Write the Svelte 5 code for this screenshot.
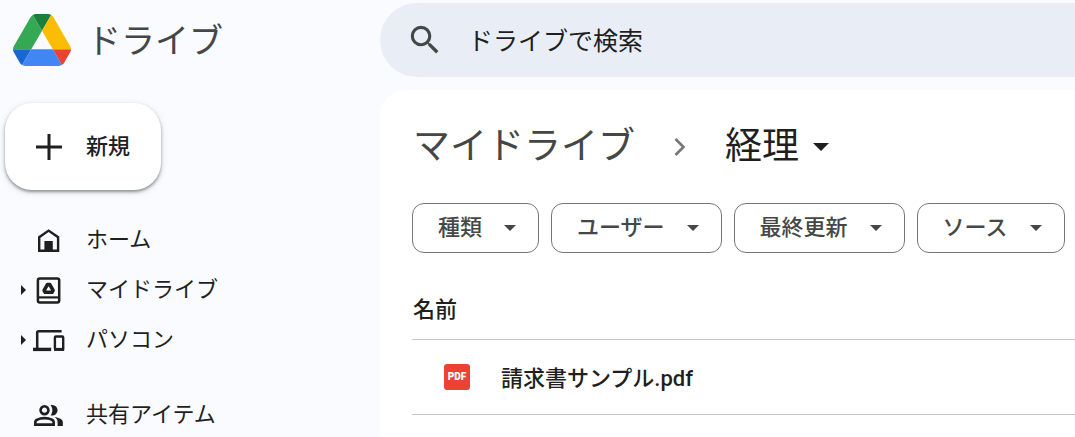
<script>
  const filters = ['種類', 'ユーザー', '最終更新', 'ソース'];
  const files = ['請求書サンプル.pdf'];
  const places = [
    { label: 'ホーム', icon: 'home' },
    { label: 'マイドライブ', icon: 'drive', expandable: true },
    { label: 'パソコン', icon: 'devices', expandable: true },
    { label: '共有アイテム', icon: 'people', spaced: true }
  ];
</script>

<div class="app">
  <aside>
    <a class="brand" href="#home">
      <svg width="58" height="52" viewBox="0 0 87.3 78" aria-hidden="true">
        <path fill="#1967d2" d="m6.6 66.85 3.85 6.65c.8 1.4 1.95 2.5 3.3 3.3l13.75-23.8h-27.5c0 1.55.4 3.1 1.2 4.5z" />
        <path fill="#34a853" d="m43.65 25-13.75-23.8c-1.35.8-2.5 1.9-3.3 3.3l-25.4 44a9.06 9.06 0 0 0 -1.2 4.5h27.5z" />
        <path fill="#ea4335" d="m73.55 76.8c1.35-.8 2.5-1.9 3.3-3.3l1.6-2.75 7.65-13.25c.8-1.4 1.2-2.95 1.2-4.5h-27.5z" />
        <path fill="#188038" d="m43.65 25 13.75-23.8c-1.35-.8-2.9-1.2-4.5-1.2h-18.5c-1.6 0-3.15.45-4.5 1.2z" />
        <path fill="#4285f4" d="m59.8 53h-32.3l-13.75 23.8c1.35.8 2.9 1.2 4.5 1.2h50.8c1.6 0 3.15-.45 4.5-1.2z" />
        <path fill="#fbbc04" d="m73.4 26.5-12.7-22c-.8-1.4-1.95-2.5-3.3-3.3l-13.75 23.8 16.15 28h27.45c0-1.55-.4-3.1-1.2-4.5z" />
      </svg>
      <span>ドライブ</span>
    </a>

    <button class="new" type="button">
      <svg width="26" height="26" viewBox="0 0 26 26" aria-hidden="true">
        <path d="M13 0v26M0 13h26" stroke="#1f1f1f" stroke-width="3" />
      </svg>
      <span>新規</span>
    </button>

    <nav>
      {#each places as place}
        <a class="place" class:spaced={place.spaced} href="#{place.icon}">
          <span class="twisty">
            {#if place.expandable}
              <svg width="5" height="10" viewBox="0 0 5 10" aria-hidden="true"><path d="M0 0l5 5-5 5z" fill="#1f1f1f" /></svg>
            {/if}
          </span>
          <svg width="34" height="32" viewBox="0 0 34 32" fill="none" stroke="#1f1f1f" aria-hidden="true">
            {#if place.icon === 'home'}
              <path d="M7.2 26.8V13.2l9.4-6.6 9.5 6.6v13.6z" stroke-width="2.4" />
              <path d="M12.4 17h8.4v10h-8.4z" fill="#1f1f1f" stroke="none" />
            {:else if place.icon === 'drive'}
              <rect x="5.9" y="4.5" width="21.3" height="24" rx="2" stroke-width="2.5" />
              <path d="M6 23.4h21" stroke-width="2.2" />
              <path d="M15.4 10.6h2.4l3.3 5.8-1.1 1.8h-6.8l-1.1-1.8z" stroke-width="3.6" stroke-linejoin="round" />
            {:else if place.icon === 'devices'}
              <path d="M5.2 24V8.6q0-1.4 1.4-1.4h23" stroke-width="2.5" />
              <path d="M1 25.4h18.2" stroke-width="3.4" />
              <rect x="22.9" y="12.5" width="8.3" height="12.8" rx="1" stroke-width="2.4" />
              <path d="M22 25.4h10.2" stroke-width="3" />
            {:else}
              <path transform="translate(.7 .75) scale(1.31)" fill="#1f1f1f" stroke="none" d="M1 20v-2.8q0-.85.438-1.562T2.6 14.55q1.55-.775 3.15-1.163T9 13t3.25.388t3.15 1.162q.725.375 1.163 1.088T17 17.2V20zm18 0v-3q0-1.1-.612-2.113T16.65 13.15q1.275.15 2.4.513t2.1.887q.9.5 1.375 1.112T23 17v3zM9 12q-1.65 0-2.825-1.175T5 8t1.175-2.825T9 4t2.825 1.175T13 8t-1.175 2.825T9 12m10-4q0 1.65-1.175 2.825T15 12q-.275 0-.7-.062t-.7-.138q.675-.8 1.037-1.775T15 8t-.362-2.025T13.6 4.2q.35-.125.7-.163T15 4q1.65 0 2.825 1.175T19 8M3 18h12v-.8q0-.275-.137-.5t-.363-.35q-1.35-.675-2.725-1.012T9 15t-2.775.338T3.5 16.35q-.225.125-.363.35T3 17.2zm6-8q.825 0 1.413-.587T11 8t-.587-1.412T9 6t-1.412.588T7 8t.588 1.413T9 10" />
            {/if}
          </svg>
          <span class="label">{place.label}</span>
        </a>
      {/each}
    </nav>
  </aside>

  <div class="content">
    <label class="search">
      <svg width="38" height="38" viewBox="0 0 24 24" aria-hidden="true">
        <path fill="#444746" d="M15.5 14h-.79l-.28-.27A6.47 6.47 0 0 0 16 9.5 6.5 6.5 0 1 0 9.5 16c1.61 0 3.09-.59 4.23-1.57l.27.28v.79l5 4.99L20.49 19zm-6 0C7.01 14 5 11.99 5 9.5S7.01 5 9.5 5 14 7.01 14 9.5 11.99 14 9.5 14" />
      </svg>
      <input type="search" placeholder="ドライブで検索" />
    </label>

    <main>
      <div class="crumbs">
        <a href="#drive">マイドライブ</a>
        <svg width="12" height="20" viewBox="0 0 12 20" aria-hidden="true">
          <path d="M1.5 2l8 8-8 8" fill="none" stroke="#747775" stroke-width="2.6" />
        </svg>
        <button class="current" type="button">
          <span>経理</span>
          <svg width="16" height="8" viewBox="0 0 16 8" aria-hidden="true"><path d="M0 0h16l-8 8z" fill="currentColor" /></svg>
        </button>
      </div>

      <div class="filters">
        {#each filters as filter}
          <button class="chip" type="button">
            <span>{filter}</span>
            <svg width="12" height="6" viewBox="0 0 12 6" aria-hidden="true"><path d="M0 0h12l-6 6z" fill="currentColor" /></svg>
          </button>
        {/each}
      </div>

      <table>
        <thead>
          <tr><th scope="col">名前</th></tr>
        </thead>
        <tbody>
          {#each files as file}
            <tr>
              <td>
                <div class="file">
                  <span class="badge">PDF</span>
                  <span class="name">{file}</span>
                </div>
              </td>
            </tr>
          {/each}
        </tbody>
      </table>
    </main>
  </div>
</div>

<style>
  :global(body) {
    background: #f9fbff;
  }

  .app {
    display: grid;
    grid-template-columns: 380px 1fr;
    height: 100vh;
    overflow: hidden;
    background: #f9fbff;
    color: #1f1f1f;
    font: 400 22px/32px "Noto Sans CJK JP", sans-serif;
    white-space: nowrap;
  }

  a {
    color: inherit;
    text-decoration: none;
  }

  button {
    border: 0;
    padding: 0;
    background: none;
    color: inherit;
    font: inherit;
    cursor: pointer;
  }

  svg {
    flex: none;
  }

  .brand {
    display: flex;
    align-items: center;
    gap: 16px;
    height: 80px;
    padding-left: 13px;
    color: #444746;
    font-size: 34px;
  }

  .brand span {
    padding-bottom: 2px;
  }

  .new {
    display: flex;
    align-items: center;
    gap: 24px;
    height: 87px;
    margin: 23px 0 25px 5px;
    padding: 0 31px;
    border-radius: 27px;
    background: #fff;
    box-shadow: 0 2px 3px rgba(60, 64, 67, 0.5), 0 2px 6px 1px rgba(60, 64, 67, 0.12);
    font-weight: 500;
  }

  .new span {
    padding-bottom: 6px;
  }

  .place {
    display: flex;
    align-items: center;
    height: 50px;
    padding-left: 21px;
  }

  .spaced {
    margin-top: 25px;
  }

  .twisty {
    display: flex;
    width: 11px;
  }

  .label {
    margin-left: 20px;
    padding-bottom: 6px;
  }

  .content {
    display: flex;
    flex-direction: column;
    gap: 13px;
    min-width: 0;
    padding-top: 3px;
  }

  .search {
    display: flex;
    align-items: center;
    gap: 24px;
    height: 74px;
    flex: none;
    padding-left: 26px;
    border-radius: 37px 0 0 37px;
    background: #e9eef6;
  }

  .search input {
    flex: 1;
    min-width: 0;
    padding: 0 0 2px;
    border: 0;
    outline: 0;
    background: none;
    color: inherit;
    font: inherit;
    font-size: 25px;
    appearance: none;
  }

  .search input::placeholder {
    color: #1f1f1f;
    opacity: 1;
  }

  main {
    flex: 1;
    padding: 29px 0 0 32px;
    border-radius: 26px 0 0 0;
    background: #fff;
  }

  .crumbs {
    display: flex;
    align-items: center;
    height: 56px;
    gap: 39px;
    padding-left: 1px;
    color: #444746;
    font-size: 37px;
  }

  .crumbs a,
  .crumbs span {
    padding-bottom: 8px;
  }

  .current {
    display: flex;
    align-items: center;
    gap: 14px;
    color: #1f1f1f;
  }

  .filters {
    display: flex;
    gap: 12px;
    margin-top: 28px;
  }

  .chip {
    display: flex;
    align-items: center;
    gap: 22px;
    height: 50px;
    padding: 0 22px 0 25px;
    border: 1px solid #747775;
    border-radius: 12px;
    color: #444746;
    font-weight: 500;
  }

  .chip span {
    padding-bottom: 6px;
  }

  table {
    width: 100%;
    margin-top: 26px;
    border-collapse: collapse;
    text-align: left;
    font-weight: 500;
  }

  th,
  td {
    padding: 0;
    border-bottom: 1px solid #c7c7c7;
    font-weight: 500;
  }

  th {
    height: 56px;
    padding: 0 0 4px 1px;
  }

  td {
    height: 74px;
  }

  .file {
    display: flex;
    align-items: center;
    gap: 31px;
    padding-left: 32px;
  }

  .name {
    padding-top: 4px;
    font-family: Roboto, "Noto Sans CJK JP", sans-serif;
  }

  .badge {
    width: 26px;
    border-radius: 3px;
    background: #ea4335;
    color: #fff;
    font: 900 10px/26px Roboto, sans-serif;
    text-align: center;
  }
</style>
